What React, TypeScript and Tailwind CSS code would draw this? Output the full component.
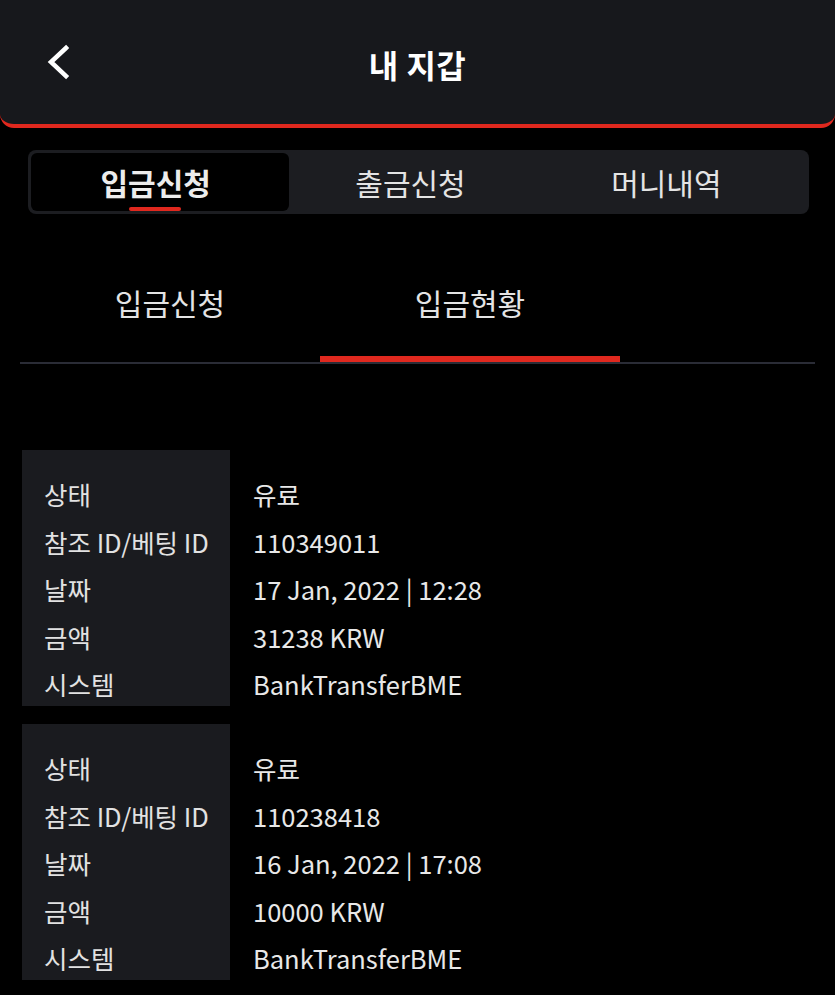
type Deposit = {
  status: string;
  refId: string;
  date: string;
  amount: string;
  system: string;
};

const deposits: Deposit[] = [
  {
    status: '유료',
    refId: '110349011',
    date: '17 Jan, 2022 | 12:28',
    amount: '31238 KRW',
    system: 'BankTransferBME',
  },
  {
    status: '유료',
    refId: '110238418',
    date: '16 Jan, 2022 | 17:08',
    amount: '10000 KRW',
    system: 'BankTransferBME',
  },
];

const labels = ['상태', '참조 ID/베팅 ID', '날짜', '금액', '시스템'];

function DepositCard({ item }: { item: Deposit }) {
  const values = [item.status, item.refId, item.date, item.amount, item.system];
  return (
    <div className="flex h-[256px]">
      <div className="w-[208px] bg-[#1a1b1f] pl-[22px] pt-[20px] text-[25.5px] leading-[47.5px] text-[#e2e2e2]">
        {labels.map((l) => (
          <div key={l} className="whitespace-nowrap">{l}</div>
        ))}
      </div>
      <div className="flex-1 pl-[23px] pt-[20px] text-[25.5px] leading-[47.5px] text-[#e8e8e8]">
        {values.map((v, i) => (
          <div key={i}>{v}</div>
        ))}
      </div>
    </div>
  );
}

export default function App() {
  const mainTabs = [
    { label: '입금신청', pad: 'pr-[9px]' },
    { label: '출금신청', pad: 'pr-[16px]' },
    { label: '머니내역', pad: 'pr-[21px]' },
  ];

  return (
    <div
      className="min-h-screen w-full bg-black"
      style={{ fontFamily: '"Noto Sans CJK KR", "Noto Sans", sans-serif' }}
    >
      {/* Header */}
      <header className="relative flex h-[128px] items-center justify-center rounded-b-[14px] border-b-4 border-[#e0281e] bg-[#17181c]">
        <button className="absolute left-[46px] top-[43px] text-white">
          <svg width="26" height="38" viewBox="0 0 26 38" fill="none">
            <polyline
              points="20,5 5,19 20,33"
              stroke="currentColor"
              strokeWidth="4.5"
              strokeLinecap="square"
              strokeLinejoin="miter"
            />
          </svg>
        </button>
        <h1 className="pt-[4px] text-[32px] font-bold tracking-[0.5px] text-white">내 지갑</h1>
      </header>

      {/* Segmented tabs */}
      <div className="ml-[28px] mr-[26px] mt-[22px] grid h-[64px] grid-cols-3 rounded-[8px] bg-[#1c1d21] p-[3px]">
        {mainTabs.map((t, i) => (
          <div
            key={t.label}
            className={`relative flex items-center justify-center rounded-[6px] text-[30px] ${t.pad} ${
              i === 0 ? 'bg-black font-bold text-[#ececec]' : 'text-[#e4e4e4]'
            }`}
          >
            {t.label}
            {i === 0 && (
              <span className="absolute bottom-[0px] left-[98px] h-[4px] w-[52px] rounded-full bg-[#e0281e]" />
            )}
          </div>
        ))}
      </div>

      {/* Sub tabs */}
      <div className="mx-[20px] mt-[36px] flex border-b-2 border-[#2a2c36]">
        <div className="w-[300px] border-b-[6px] border-transparent pt-[31px] pb-[33px] text-center text-[30px] leading-[42px] text-[#e4e4e4]">
          입금신청
        </div>
        <div className="w-[300px] border-b-[6px] border-[#e0281e] pt-[31px] pb-[33px] text-center text-[30px] leading-[42px] text-[#e4e4e4]">
          입금현황
        </div>
      </div>

      {/* Deposit list */}
      <div className="mt-[86px] flex flex-col gap-[18px] pl-[22px]">
        {deposits.map((d) => (
          <DepositCard key={d.refId} item={d} />
        ))}
      </div>
    </div>
  );
}
